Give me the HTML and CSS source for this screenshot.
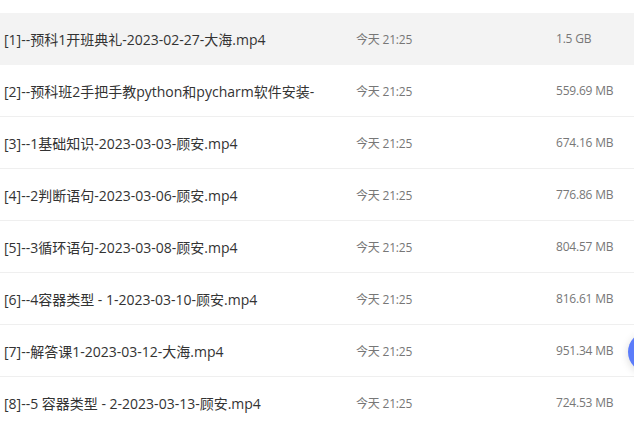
FILE: index.html
```html
<!DOCTYPE html>
<html lang="zh-CN">
<head>
  <meta charset="UTF-8" />
  <meta name="viewport" content="width=device-width, initial-scale=1.0"/>
  <title>文件列表</title>
  <link rel="stylesheet" href="styles.css">
</head>
<body>
  <div class="file-list">
    <div class="file-row active">
      <span class="name">[1]--预科1开班典礼-2023-02-27-大海.mp4</span>
      <span class="time">今天 21:25</span>
      <span class="size">1.5 GB</span>
    </div>
    <div class="file-row">
      <span class="name">[2]--预科班2手把手教python和pycharm软件安装-</span>
      <span class="time">今天 21:25</span>
      <span class="size">559.69 MB</span>
    </div>
    <div class="file-row">
      <span class="name">[3]--1基础知识-2023-03-03-顾安.mp4</span>
      <span class="time">今天 21:25</span>
      <span class="size">674.16 MB</span>
    </div>
    <div class="file-row">
      <span class="name">[4]--2判断语句-2023-03-06-顾安.mp4</span>
      <span class="time">今天 21:25</span>
      <span class="size">776.86 MB</span>
    </div>
    <div class="file-row">
      <span class="name">[5]--3循环语句-2023-03-08-顾安.mp4</span>
      <span class="time">今天 21:25</span>
      <span class="size">804.57 MB</span>
    </div>
    <div class="file-row">
      <span class="name">[6]--4容器类型 - 1-2023-03-10-顾安.mp4</span>
      <span class="time">今天 21:25</span>
      <span class="size">816.61 MB</span>
    </div>
    <div class="file-row">
      <span class="name">[7]--解答课1-2023-03-12-大海.mp4</span>
      <span class="time">今天 21:25</span>
      <span class="size">951.34 MB</span>
    </div>
    <div class="file-row">
      <span class="name">[8]--5 容器类型 - 2-2023-03-13-顾安.mp4</span>
      <span class="time">今天 21:25</span>
      <span class="size">724.53 MB</span>
    </div>
  </div>

  <div class="float-btn"></div>
</body>
</html>
```

FILE: styles.css
```css
body {
  font-family: "Open Sans", "Noto Sans CJK SC", sans-serif;
  margin: 0;
  padding-top: 13px;
  background-color: #fff;
  overflow: hidden;
}
.file-list {
  width: 100%;
}
.file-row {
  display: grid;
  grid-template-columns: 356px 200px 1fr;
  align-items: center;
  height: 51px;
  border-bottom: 1px solid #efefef;
}
.file-row.active {
  background-color: #f3f3f3;
  border-bottom-color: #f3f3f3;
}
.name {
  padding-left: 4px;
  font-size: 14px;
  color: #333;
  white-space: nowrap;
  overflow: hidden;
}
.time, .size {
  font-size: 12px;
  letter-spacing: -0.2px;
  color: #777;
}
.float-btn {
  position: fixed;
  left: 628px;
  top: 332px;
  width: 40px;
  height: 40px;
  border-radius: 50%;
  background-color: #5b7cfa;
  box-shadow: 0 2px 8px rgba(0, 0, 0, 0.15);
}
```
